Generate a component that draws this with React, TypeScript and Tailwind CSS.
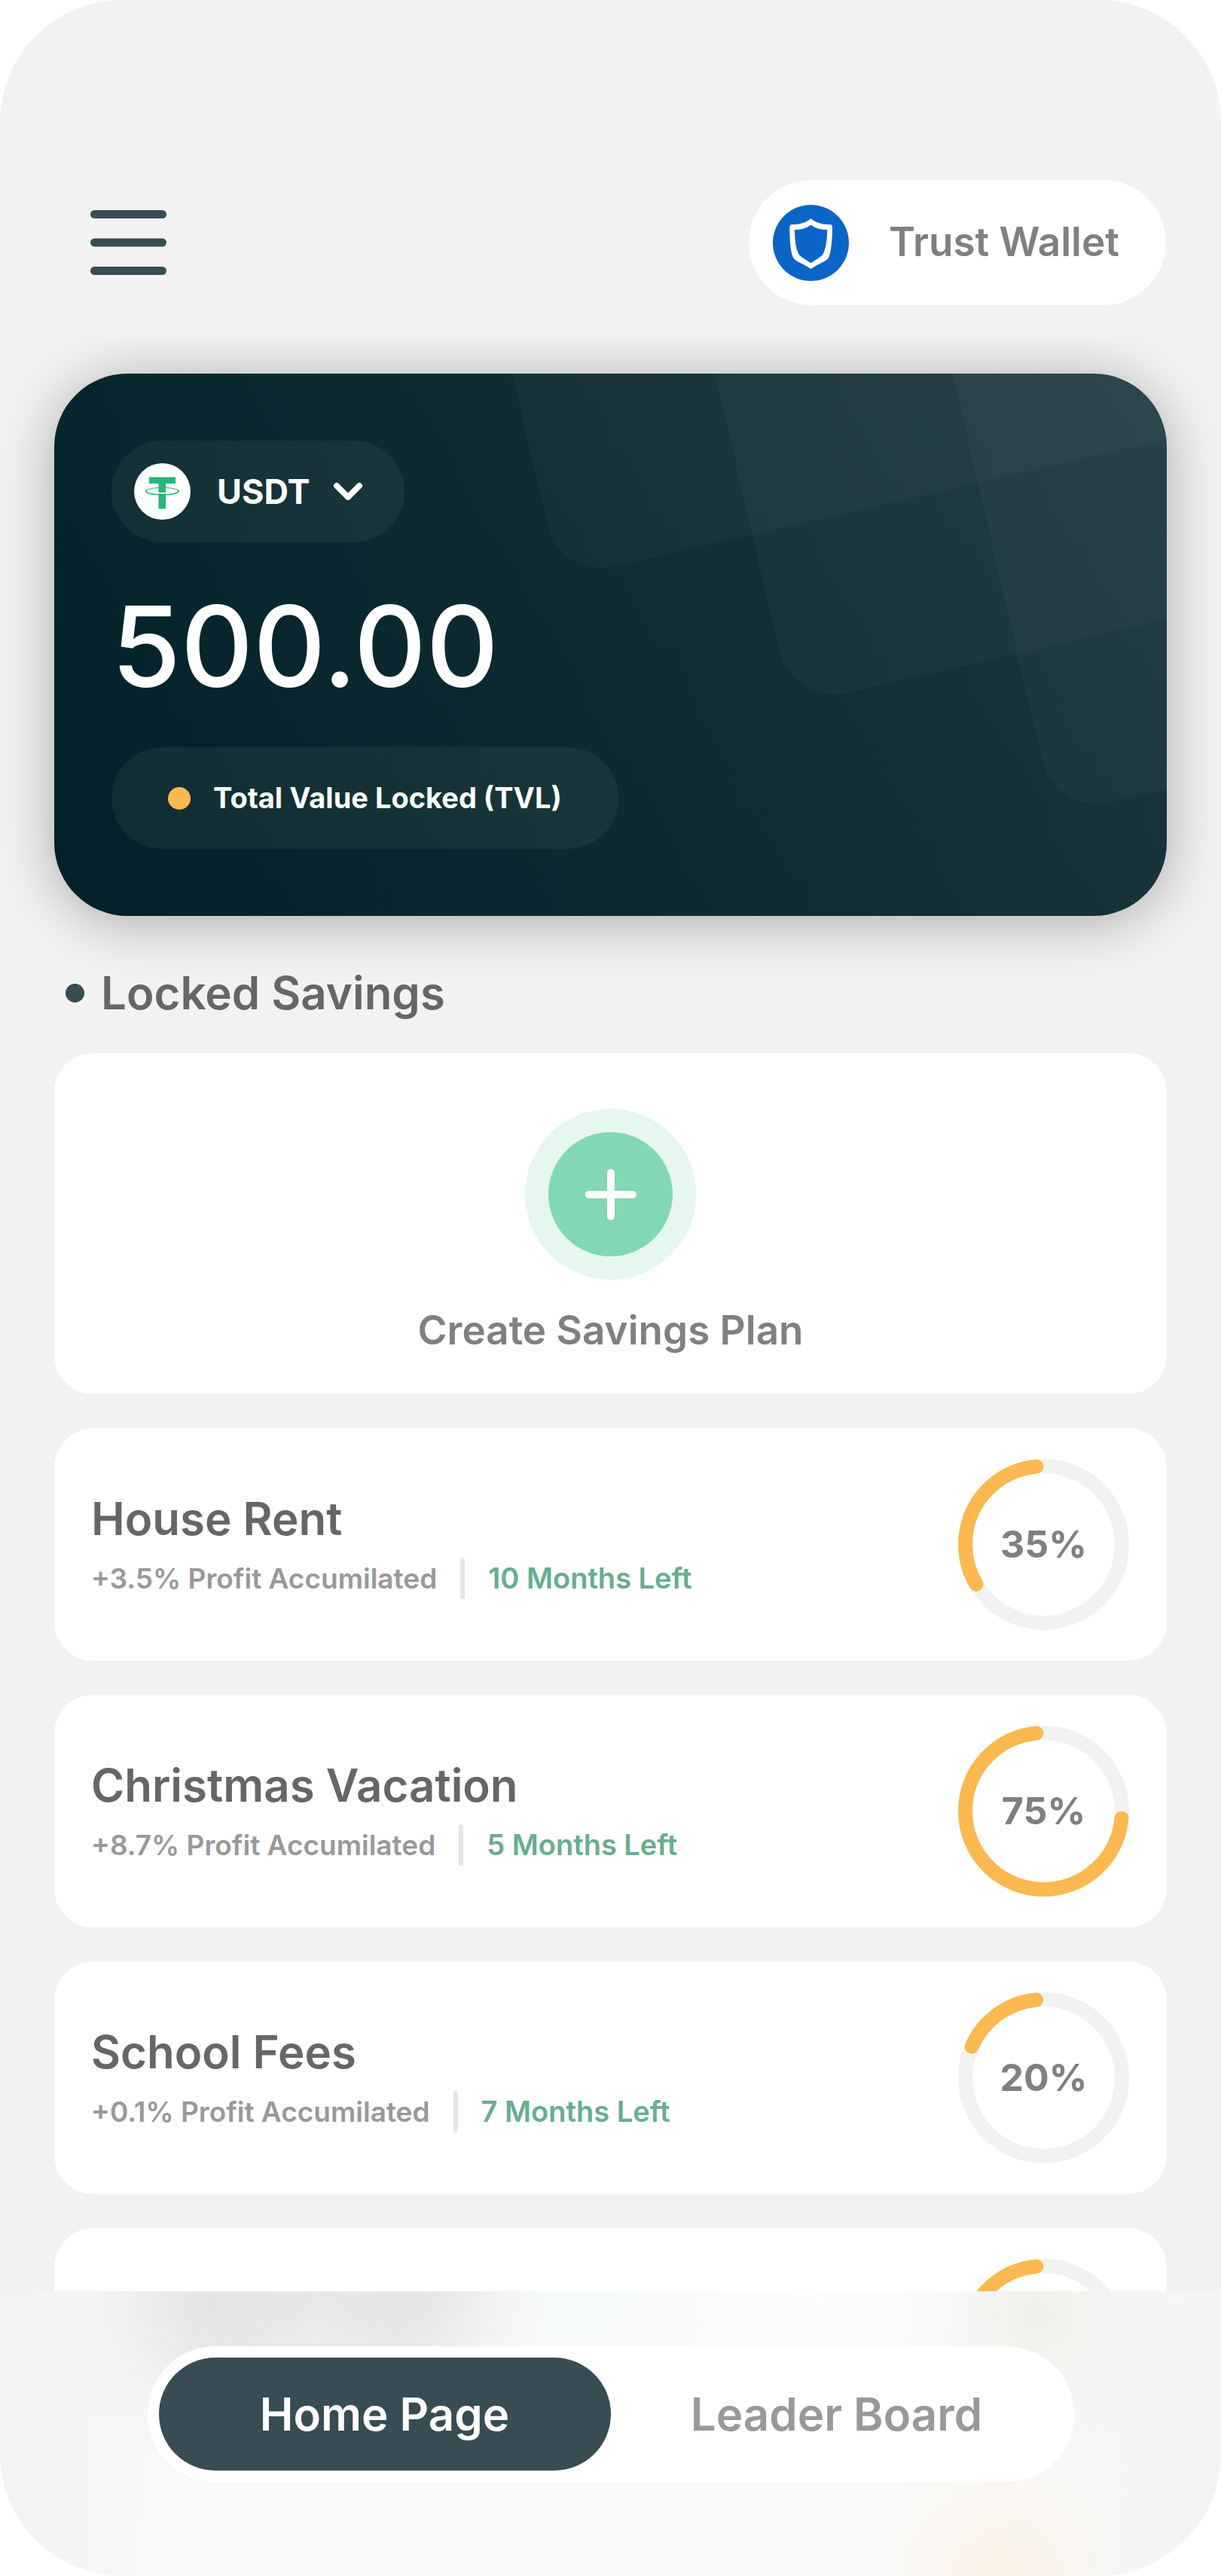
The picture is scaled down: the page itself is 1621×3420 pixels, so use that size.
type Plan = {
  name: string;
  profit: string;
  monthsLeft: string;
  percent: number;
};

const plans: Plan[] = [
  { name: "House Rent", profit: "+3.5% Profit Accumilated", monthsLeft: "10 Months Left", percent: 35 },
  { name: "Christmas Vacation", profit: "+8.7% Profit Accumilated", monthsLeft: "5 Months Left", percent: 75 },
  { name: "School Fees", profit: "+0.1% Profit Accumilated", monthsLeft: "7 Months Left", percent: 20 },
];

function MenuIcon() {
  return (
    <svg className="h-[86px] w-[101px]" viewBox="0 0 101 86" fill="#374D53" aria-hidden="true">
      <rect width="101" height="11" rx="5.5" />
      <rect y="37.5" width="101" height="11" rx="5.5" />
      <rect y="75" width="101" height="11" rx="5.5" />
    </svg>
  );
}

function ShieldIcon() {
  return (
    <svg className="size-[101px] shrink-0" viewBox="0 0 101 101" aria-hidden="true">
      <circle cx="50.5" cy="50.5" r="50.5" fill="#0B65C6" />
      <path
        fill="#FFFFFF"
        fillRule="evenodd"
        d="M50.5 18C58 24.5 67 26 76 26Q79 26 79 30C79 46 77.500 61 74.700 68.500C72.500 75 65 75.500 50.500 85C36 75.500 28.500 75 26.300 68.500C23.500 61 22.300 46 22.300 30Q22.300 26 25.500 26C34 26 43 24.500 50.500 18ZM50.500 26.500C44 31.500 37 33 29 33C29.200 45 30 54 32.500 61C35 68.500 38 69 50.500 77.300C63 69 66 68.500 68.500 61C71 54 72 45 72.300 33C64 33 57 31.500 50.500 26.500Z"
      />
    </svg>
  );
}

function TetherIcon() {
  return (
    <svg className="size-[75px] shrink-0" viewBox="0 0 75 75" aria-hidden="true">
      <circle cx="37.5" cy="37.5" r="37.5" fill="#FFFFFF" />
      <path d="M20 18.500H55V27H42V60.500H32.500V27H20Z" fill="#26B67B" />
      <path d="M32 38.800Q37.500 39.400 43 38.800V40.300Q37.500 40.900 32 40.300Z" fill="#FFFFFF" />
      <path
        fill="#26B67B"
        fillRule="evenodd"
        d="M37.500 32C50 32 60 34 60 37.200C60 40.500 50 42.500 37.500 42.500C25 42.500 15 40.500 15 37.200C15 34 25 32 37.500 32ZM37.500 33C27 33 17 34.500 17 37C17 39.500 27 40.900 37.500 40.900C48 40.900 58 39.500 58 37C58 34.500 48 33 37.500 33Z"
      />
    </svg>
  );
}

function Header() {
  return (
    <header className="z-10 flex shrink-0 items-center justify-between bg-[#F2F2F2] pt-[239px] pr-[73px] pb-[42px] pl-[120px]">
      <button type="button" aria-label="Menu">
        <MenuIcon />
      </button>
      <button
        type="button"
        className="flex h-[166px] items-center gap-[53px] rounded-full bg-white pr-[62px] pl-[32px] text-[53px] font-semibold text-[#808080]"
      >
        <ShieldIcon />
        Trust Wallet
      </button>
    </header>
  );
}

function BalanceCard() {
  return (
    <section
      aria-label="Balance"
      className="relative overflow-hidden rounded-[97px] bg-linear-60 from-[#032128] from-5% to-[#1D383F] px-[76px] py-[89px] text-white"
    >
      <svg
        className="absolute inset-0 h-full w-full"
        viewBox="0 0 1477 720"
        preserveAspectRatio="xMaxYMin slice"
        fill="#FFFFFF"
        fillOpacity="0.027"
        aria-hidden="true"
      >
        <rect y="-1000" width="1400" height="1000" rx="75" transform="translate(671 273) rotate(-13)" />
        <rect y="-1000" width="1400" height="1000" rx="75" transform="translate(979 441) rotate(-13)" />
        <rect y="-1000" width="1400" height="1000" rx="75" transform="translate(1328 586) rotate(-13)" />
      </svg>
      <div className="relative flex flex-col items-start">
        <label className="flex h-[135px] items-center rounded-full bg-white/5 pr-[55px] pl-[30px]">
          <TetherIcon />
          <select
            aria-label="Currency"
            className="ml-[35px] appearance-none bg-transparent text-[45px] leading-[60px] font-bold outline-none"
          >
            <option>USDT</option>
          </select>
          <svg
            className="pointer-events-none ml-[30px] h-[26px] w-[40px]"
            viewBox="0 0 40 26"
            fill="none"
            stroke="currentColor"
            strokeWidth="8"
            strokeLinecap="round"
            strokeLinejoin="round"
            aria-hidden="true"
          >
            <path d="M5 5L20 20L35 5" />
          </svg>
        </label>
        <p className="mt-[63px] mb-[59px] text-[149px] leading-[150px] font-medium">500.00</p>
        <p className="flex h-[135px] items-center gap-[30px] rounded-full bg-white/5 px-[75px] text-[38px] font-bold">
          <span className="size-[30px] rounded-full bg-[#FBB950]" />
          Total Value Locked (TVL)
        </p>
      </div>
    </section>
  );
}

function CreatePlan() {
  return (
    <button
      type="button"
      className="flex w-full flex-col items-center rounded-[52px] bg-white pt-[74px] pb-[53px] text-[53px] leading-[64px] font-semibold text-[#808080]"
    >
      <span className="mb-[35px] flex size-[227px] items-center justify-center rounded-full bg-[#E5F7EE]">
        <span className="flex size-[165px] items-center justify-center rounded-full bg-[#82D8B4]">
          <svg
            className="size-[68px]"
            viewBox="0 0 68 68"
            stroke="#FFFFFF"
            strokeWidth="10"
            strokeLinecap="round"
            aria-hidden="true"
          >
            <path d="M34 5V63M5 34H63" />
          </svg>
        </span>
      </span>
      Create Savings Plan
    </button>
  );
}

// The arc runs counter-clockwise from the top; both ends are inset so the round caps stay inside the value.
function ProgressRing({ percent, labelled = true }: { percent: number; labelled?: boolean }) {
  const radius = 104;
  const inset = 1.5;
  return (
    <div className="relative flex size-[227px] shrink-0 items-center justify-center">
      <svg className="absolute inset-0 h-full w-full" viewBox="0 0 227 227" fill="none" strokeWidth="19" aria-hidden="true">
        <circle cx="113.5" cy="113.5" r={radius} stroke="#F2F2F2" />
        <circle
          cx="113.5"
          cy="113.5"
          r={radius}
          stroke="#FBB950"
          strokeLinecap="round"
          pathLength={100}
          strokeDasharray={`${percent - inset * 2} 200`}
          strokeDashoffset={-inset}
          transform="translate(227 0) scale(-1 1) rotate(-90 113.5 113.5)"
        />
      </svg>
      {labelled && <span className="relative text-[50px] font-bold text-[#808080]">{percent}%</span>}
    </div>
  );
}

function PlanCard({ plan }: { plan: Plan }) {
  return (
    <li className="flex items-center justify-between rounded-[52px] bg-white py-[41px] pr-[50px] pl-[49px]">
      <div className="pt-[2px]">
        <h3 className="mb-[16px] text-[60px] leading-[72px] font-semibold text-[#666666]">{plan.name}</h3>
        <p className="flex items-center gap-[31px] text-[37px] leading-[55px] font-semibold">
          <span className="text-[#999999]">{plan.profit}</span>
          <span className="h-[55px] w-[6px] rounded-full bg-[#E5E5E5]" />
          <span className="text-[38px] text-[#67AD91]">{plan.monthsLeft}</span>
        </p>
      </div>
      <ProgressRing percent={plan.percent} />
    </li>
  );
}

function BottomNav() {
  return (
    <nav className="z-10 flex shrink-0 justify-center bg-[#F9F9F9] bg-[radial-gradient(ellipse_200px_230px_at_17%_5%,#DCDCDC99_0%,#DFDFDF66_35%,#E8E8E826_70%,#F0F0F000_100%),radial-gradient(ellipse_190px_190px_at_34%_4%,#DCDCDC99_0%,#DFDFDF66_35%,#E8E8E826_70%,#F0F0F000_100%),radial-gradient(ellipse_300px_170px_at_25%_4%,#E0E0E0B3_0%,#E4E4E480_40%,#ECECEC26_75%,#F0F0F000_100%),radial-gradient(ellipse_260px_200px_at_48%_0%,#F4F9F7_0%,#F5F9F780_50%,#F5F9F700_100%),radial-gradient(ellipse_200px_190px_at_85%_8%,#F1EFEB_0%,#F3F1EE80_50%,#F3F1EE00_100%),radial-gradient(ellipse_210px_230px_at_82%_104%,#FBF2E4_0%,#FAF4EA99_45%,#FAF6EF33_75%,#FAF6EF00_100%),radial-gradient(ellipse_620px_180px_at_66%_0%,#FDFDFD_0%,#FDFDFD00_100%),linear-gradient(90deg,#F3F3F3_0%,#F9F9F900_16%,#F9F9F900_82%,#F3F3F3_100%)] pt-[73px] pb-[125px]">
      <div className="flex w-[1230px] max-w-full rounded-full bg-white p-[15px] text-[60px] leading-[150px] font-semibold">
        <a href="#home" aria-current="page" className="flex-1 rounded-full bg-[#374D53] text-center text-white">
          Home Page
        </a>
        <a href="#leader-board" className="flex-1 rounded-full text-center text-[#999999]">
          Leader Board
        </a>
      </div>
    </nav>
  );
}

export default function App() {
  return (
    <div className="bg-white">
      <div className="flex h-screen flex-col overflow-hidden rounded-[163px] bg-[#F2F2F2] font-['Inter',sans-serif]">
        <Header />
        <main className="min-h-0 flex-1 overflow-y-auto px-[72px] pt-[49px] [scrollbar-width:none]">
          <div className="rounded-[97px] shadow-[0_8px_75px_rgba(0,0,0,0.3)]">
            <BalanceCard />
          </div>
          <h2 className="relative flex items-center gap-[22px] pt-[66px] pb-[44px] pl-[15px] text-[60px] leading-[72px] font-semibold text-[#666666]">
            <span className="size-[25px] rounded-full bg-[#374D53]" />
            Locked Savings
          </h2>
          <CreatePlan />
          <ul className="mt-[45px] flex flex-col gap-[45px]">
            {plans.map((plan) => (
              <PlanCard key={plan.name} plan={plan} />
            ))}
            <li className="flex justify-end rounded-[52px] bg-white py-[41px] pr-[50px]">
              <ProgressRing percent={35} labelled={false} />
            </li>
          </ul>
        </main>
        <BottomNav />
      </div>
    </div>
  );
}
